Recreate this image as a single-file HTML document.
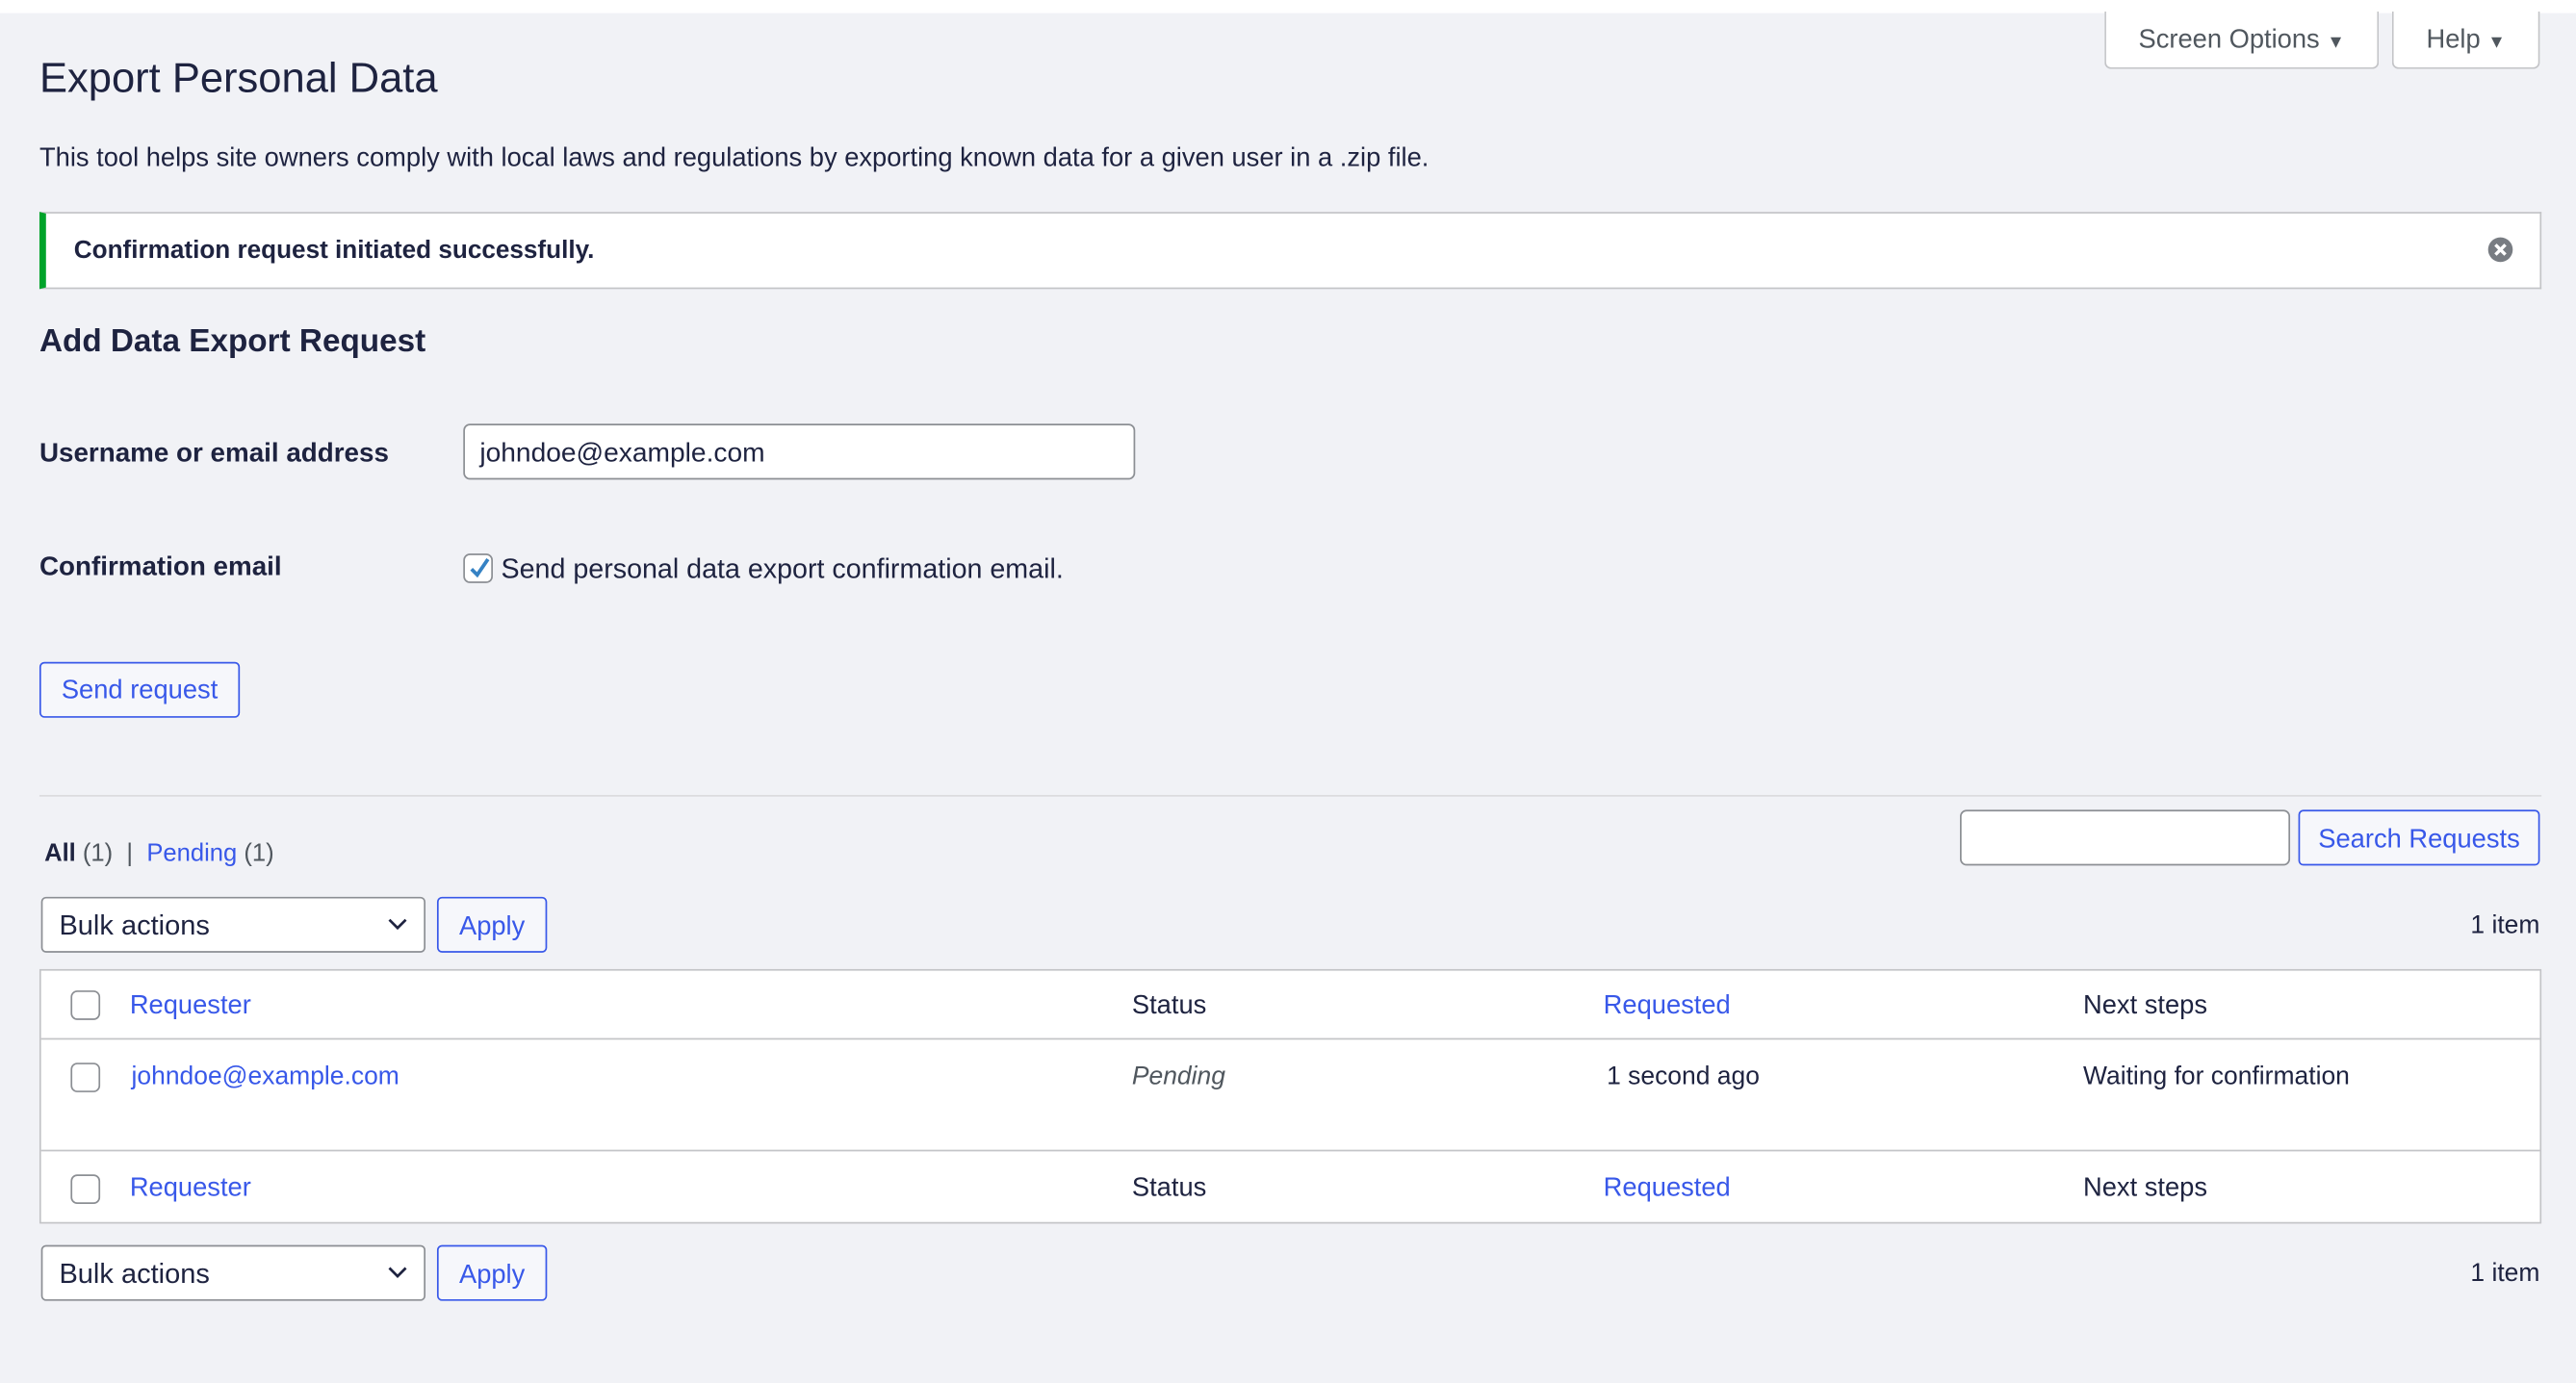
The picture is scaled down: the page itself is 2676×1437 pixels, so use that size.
<!DOCTYPE html>
<html><head><meta charset="utf-8"><style>
*{box-sizing:border-box;margin:0;padding:0}
html,body{width:2676px;height:1437px;overflow:hidden;background:#f1f2f6}
#w{position:absolute;left:0;top:0;width:1568px;height:842px;transform:scale(1.70663);transform-origin:0 0;font-family:"Liberation Sans",sans-serif;color:#1e2340;font-size:16px}
.a{position:absolute;white-space:nowrap}
.top{left:0;top:0;width:1568px;height:8px;background:#fff}
.tab{background:#fff;border:1px solid #c3c4c7;border-top:none;border-radius:0 0 4px 4px;height:35px;top:7px;font-size:16px;color:#50575e;line-height:36px;text-align:center}
.btn{border:1px solid #3858e9;border-radius:3px;color:#3858e9;background:#f6f7fb;text-align:center;font-size:16px}
.sel{background:#fff;border:1px solid #8c8f94;border-radius:3px;height:34px;width:234px;left:25px;font-size:17px;color:#1e2340;padding-left:10px;line-height:34px}
.blue{color:#3858e9}
.cb{width:18px;height:18px;border:1px solid #8c8f94;border-radius:4px;background:#fff}
</style></head><body><div id="w">
<div class="a top"></div>
<div class="a tab" style="left:1281px;width:167px">Screen Options <span style="font-size:11px">▼</span></div>
<div class="a tab" style="left:1456px;width:90px">Help <span style="font-size:11px">▼</span></div>
<div class="a" style="left:24px;top:34px;font-size:25.5px">Export Personal Data</div>
<div class="a" style="left:24px;top:88px;font-size:16px">This tool helps site owners comply with local laws and regulations by exporting known data for a given user in a .zip file.</div>
<div class="a" style="left:24px;top:129px;width:1523px;height:47px;background:#fff;border:1px solid #c3c4c7;border-left:4px solid #00a32a"></div>
<div class="a" style="left:45px;top:144px;font-size:15.3px;font-weight:bold">Confirmation request initiated successfully.</div>
<svg class="a" style="left:1514px;top:144px" width="16" height="16" viewBox="0 0 16 16"><circle cx="8" cy="8" r="7.5" fill="#787c82"/><path d="M5 5L11 11M11 5L5 11" stroke="#fff" stroke-width="2"/></svg>
<div class="a" style="left:24px;top:197px;font-size:19.5px;font-weight:bold">Add Data Export Request</div>
<div class="a" style="left:24px;top:267px;font-size:16.3px;font-weight:bold">Username or email address</div>
<div class="a" style="left:282px;top:258px;width:409px;height:34px;background:#fff;border:1px solid #8c8f94;border-radius:4px;padding-left:9px;line-height:34px;font-size:16.5px">johndoe@example.com</div>
<div class="a" style="left:24px;top:336px;font-size:16.3px;font-weight:bold">Confirmation email</div>
<div class="a cb" style="left:282px;top:337px"></div>
<svg class="a" style="left:283px;top:337px" width="18" height="18" viewBox="0 0 18 18"><path d="M4 9.5L7.5 13L14 3.5" stroke="#3582c4" stroke-width="2.2" fill="none"/></svg>
<div class="a" style="left:305px;top:337px;font-size:16.8px">Send personal data export confirmation email.</div>
<div class="a btn" style="left:24px;top:403px;width:122px;height:34px;line-height:34px">Send request</div>
<div class="a" style="left:24px;top:484px;width:1523px;height:1px;background:#dcdcde"></div>
<div class="a" style="left:27px;top:511px;font-size:15px;color:#50575e"><b style="color:#1e2340">All</b> (1) &nbsp;| &nbsp;<span class="blue">Pending</span> (1)</div>
<div class="a" style="left:1193px;top:493px;width:201px;height:34px;background:#fff;border:1px solid #8c8f94;border-radius:4px"></div>
<div class="a btn" style="left:1399px;top:493px;width:147px;height:34px;line-height:35px">Search Requests</div>
<div class="a sel" style="top:546px">Bulk actions</div>
<svg class="a" style="left:235px;top:558px" width="14" height="10" viewBox="0 0 14 10"><path d="M2 2L7 7L12 2" stroke="#1e2340" stroke-width="1.6" fill="none"/></svg>
<div class="a btn" style="left:266px;top:546px;width:67px;height:34px;line-height:35px">Apply</div>
<div class="a" style="right:22px;top:555px;font-size:15.5px">1 item</div>
<div class="a" style="left:24px;top:590px;width:1523px;height:155px;background:#fff;border:1px solid #c3c4c7"></div>
<div class="a" style="left:25px;top:632px;width:1521px;height:1px;background:#c3c4c7"></div>
<div class="a" style="left:25px;top:700px;width:1521px;height:1px;background:#c3c4c7"></div>
<div class="a cb" style="left:43px;top:603px"></div>
<div class="a blue" style="left:79px;top:604px">Requester</div>
<div class="a" style="left:689px;top:604px">Status</div>
<div class="a blue" style="left:976px;top:604px">Requested</div>
<div class="a" style="left:1268px;top:604px">Next steps</div>
<div class="a cb" style="left:43px;top:647px"></div>
<div class="a blue" style="left:80px;top:647px;font-size:15.5px">johndoe@example.com</div>
<div class="a" style="left:689px;top:647px;font-style:italic;color:#50575e;font-size:15.5px">Pending</div>
<div class="a" style="left:978px;top:647px;font-size:15.5px">1 second ago</div>
<div class="a" style="left:1268px;top:647px;font-size:15.5px">Waiting for confirmation</div>
<div class="a cb" style="left:43px;top:715px"></div>
<div class="a blue" style="left:79px;top:715px">Requester</div>
<div class="a" style="left:689px;top:715px">Status</div>
<div class="a blue" style="left:976px;top:715px">Requested</div>
<div class="a" style="left:1268px;top:715px">Next steps</div>
<div class="a sel" style="top:758px">Bulk actions</div>
<svg class="a" style="left:235px;top:770px" width="14" height="10" viewBox="0 0 14 10"><path d="M2 2L7 7L12 2" stroke="#1e2340" stroke-width="1.6" fill="none"/></svg>
<div class="a btn" style="left:266px;top:758px;width:67px;height:34px;line-height:35px">Apply</div>
<div class="a" style="right:22px;top:767px;font-size:15.5px">1 item</div>
</div></body></html>
